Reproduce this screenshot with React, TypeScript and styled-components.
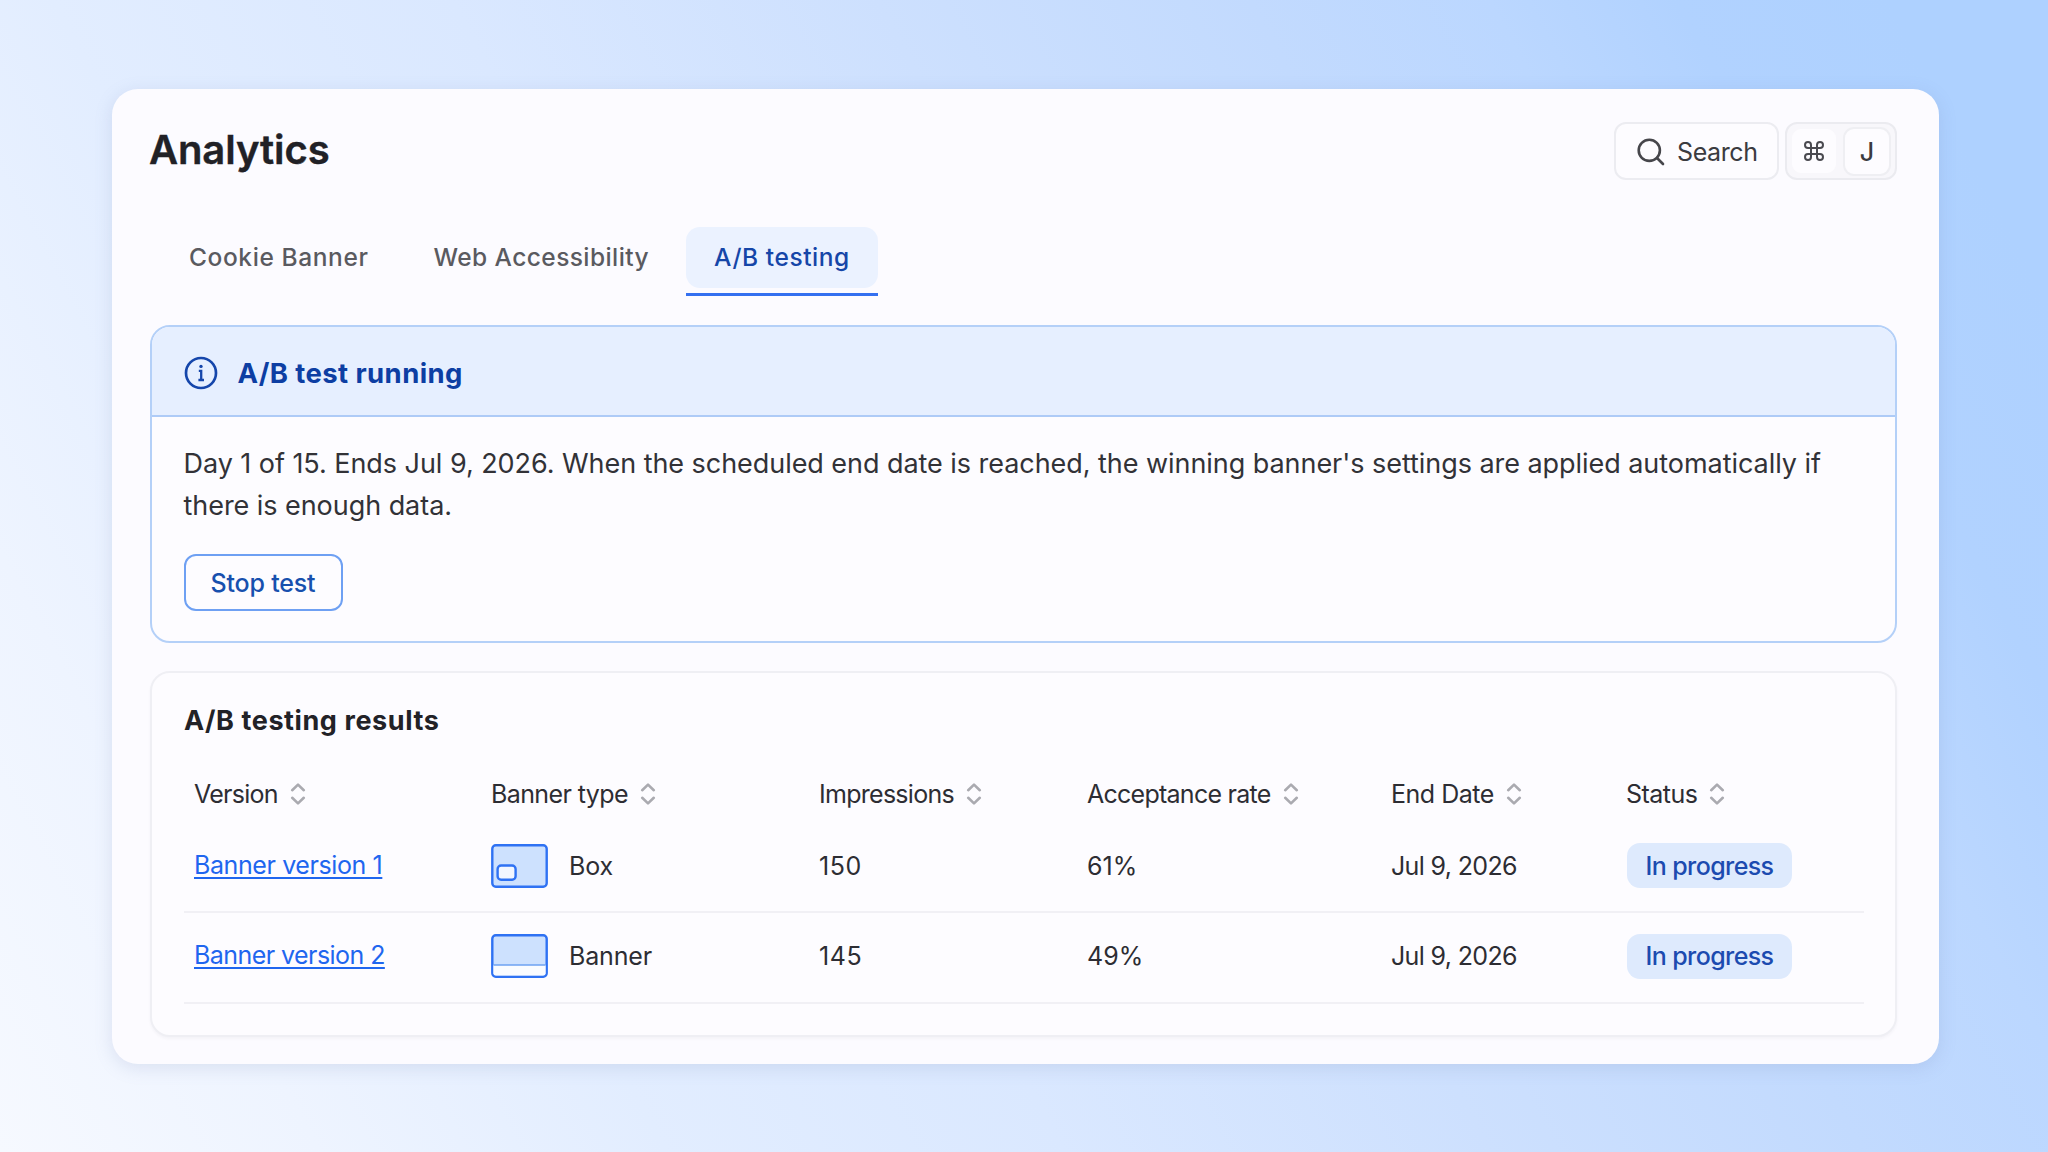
import React from "react";
import styled, { createGlobalStyle, css } from "styled-components";
import { Command } from "lucide-react";

const GlobalStyle = createGlobalStyle`
  * { box-sizing: border-box; }
  body { margin: 0; font-family: Inter, "Liberation Sans", sans-serif; color: #2d2d33; }
`;

const Page = styled.div`
  width: 2048px;
  height: 1152px;
  padding: 89px 109px 88px 112px;
  overflow: hidden;
  background: linear-gradient(62deg, #f6f9ff 0%, #eef4ff 12%, #e2edff 25%, #dae8ff 40%, #cde0fe 56%, #c2dafe 70%, #bbd7ff 79%, #b1d2ff 86%, #aed1ff 94%);
`;

const Card = styled.main`
  height: 975px;
  padding: 33px 42px 28px 38px;
  border-radius: 26px;
  background: #fcfbff;
  box-shadow: 0 4px 18px rgba(110, 130, 180, 0.18);
`;

const Header = styled.header`
  display: flex;
  justify-content: space-between;
  align-items: center;
  height: 58px;
`;

const Title = styled.h1`
  margin: 0 0 0 -1px;
  padding-bottom: 3px;
  font-size: 40px;
  line-height: 48px;
  font-weight: 600;
  letter-spacing: -0.1px;
  color: #212126;
  -webkit-text-stroke: 0.4px #212126;
`;

const Tools = styled.div`
  display: flex;
  gap: 6px;
`;

const SearchButton = styled.button`
  display: flex;
  align-items: center;
  gap: 12px;
  width: 165px;
  height: 58px;
  padding: 1px 0 0 21px;
  border: 2px solid #ececf1;
  border-radius: 12px;
  background: #fdfcff;
  font: 400 25px/30px Inter, sans-serif;
  letter-spacing: -0.4px;
  color: #3b3b40;
`;

const Shortcut = styled.div`
  display: flex;
  align-items: center;
  gap: 9px;
  width: 112px;
  height: 58px;
  padding: 0 6px 0 5px;
  border: 2px solid #ebebf0;
  border-radius: 12px;
  background: #f8f7fb;
`;

const Key = styled.kbd<{ $raised?: boolean }>`
  display: flex;
  align-items: center;
  justify-content: center;
  width: 44px;
  height: 44px;
  border-radius: 9px;
  background: #fdfcff;
  font: 500 25px/30px Inter, sans-serif;
  color: #4a4a50;
  ${(p) => p.$raised && css`
    height: 45px;
    padding-top: 2px;
    color: #3b3b40;
    box-shadow: 0 0 0 2px #efeff3;
  `}
`;

const Tabs = styled.nav`
  display: flex;
  gap: 9px;
  margin: 47px 0 27px 11px;
`;

const Tab = styled.a<{ $active?: boolean; $spacing: number }>`
  display: flex;
  flex-direction: column;
  gap: 5px;
  font-size: 24.5px;
  line-height: 30px;
  font-weight: 500;
  letter-spacing: ${(p) => p.$spacing}px;
  color: ${(p) => (p.$active ? "#1546a8" : "#5a5a60")};
`;

const TabLabel = styled.span<{ $active?: boolean }>`
  padding: 15px 28px 16px;
  border-radius: 14px;
  background: ${(p) => (p.$active ? "#ebf2ff" : "transparent")};
`;

const TabLine = styled.span<{ $active?: boolean }>`
  height: 3px;
  margin-bottom: 2px;
  background: ${(p) => (p.$active ? "#3470f0" : "transparent")};
`;

const Alert = styled.section`
  height: 318px;
  margin-left: -0.5px;
  border: 2px solid #b4d0f8;
  border-radius: 20px;
  background: #fdfcff;
  overflow: hidden;
`;

const AlertHeader = styled.div`
  display: flex;
  align-items: center;
  gap: 20px;
  height: 90px;
  padding: 4px 0 0 32px;
  border-bottom: 2px solid #aecbf7;
  background: #e6efff;
`;

const AlertTitle = styled.h2`
  margin: 0;
  font-size: 27.5px;
  line-height: 34px;
  font-weight: 700;
  letter-spacing: 0.4px;
  color: #0d3ea3;
`;

const AlertBody = styled.div`
  display: flex;
  flex-direction: column;
  align-items: flex-start;
  gap: 27px;
  padding: 26px 32px 0;
`;

const AlertText = styled.p`
  margin: 0;
  font-size: 27px;
  line-height: 42px;
  letter-spacing: -0.05px;
  color: #323237;
  white-space: nowrap;
`;

const StopButton = styled.button`
  width: 159px;
  height: 57px;
  padding: 0;
  border: 2px solid #6ea0f3;
  border-radius: 12px;
  background: #fdfcff;
  font: 500 25px/30px Inter, sans-serif;
  letter-spacing: -0.2px;
  color: #1750ae;
`;

const Results = styled.section`
  height: 366px;
  margin-top: 28px;
  padding: 31px 31px 0 32px;
  border: 2px solid #efeff4;
  border-radius: 20px;
  background: #fdfcff;
  box-shadow: 0 2px 3px rgba(40, 40, 80, 0.04);
`;

const ResultsTitle = styled.h2`
  margin: 0;
  font-size: 27px;
  line-height: 34px;
  font-weight: 700;
  letter-spacing: 0.58px;
  color: #222227;
`;

const Row = styled.div<{ $head?: boolean; $last?: boolean }>`
  display: grid;
  grid-template-columns: 297px 328px 268px 304px 235px 1fr;
  align-items: center;
  height: ${(p) => (p.$last ? 91 : 92)}px;
  padding: 0 0 ${(p) => (p.$last ? 3 : 1)}px 10px;
  border-bottom: 2px solid #f1f0f5;
  font-size: 25px;
  line-height: 30px;
  ${(p) => p.$head && css`
    height: 83px;
    padding-bottom: 2px;
    padding-top: 30px;
    border: 0;
  `}
`;

const Cell = styled.div<{ $spacing?: number; $gap?: number }>`
  display: flex;
  align-items: center;
  gap: ${(p) => p.$gap ?? 12}px;
  letter-spacing: ${(p) => p.$spacing ?? 0}px;
`;

const Link = styled.a<{ $spacing: number }>`
  justify-self: start;
  padding-bottom: 2px;
  color: #1f66ef;
  letter-spacing: ${(p) => p.$spacing}px;
  text-decoration: underline;
  text-decoration-thickness: 2px;
  text-underline-offset: 3px;
  text-decoration-skip-ink: none;
`;

const Pill = styled.span`
  display: flex;
  align-items: center;
  justify-content: center;
  width: 165px;
  height: 45px;
  margin-left: 1px;
  border-radius: 13px;
  background: #deeafd;
  font-weight: 500;
  letter-spacing: -0.6px;
  color: #1c4bb0;
`;

const SearchIcon = () => (
  <svg width="28" height="28" viewBox="0 0 28 28" fill="none" stroke="#46464b" strokeWidth="2.6" strokeLinecap="round">
    <circle cx="12.3" cy="12.3" r="10.6" />
    <path d="M20 20L26 26" />
  </svg>
);

const InfoIcon = () => (
  <svg width="34" height="34" viewBox="0 0 34 34" fill="none" stroke="#1546ab" strokeWidth="2.7">
    <circle cx="17" cy="17" r="15" />
    <path d="M14.8 14.8H17.2V24M14.4 24H20" strokeWidth="2.3" />
    <circle cx="17" cy="10.4" r="1.7" fill="#1546ab" stroke="none" />
  </svg>
);

const SortIcon = () => (
  <svg width="16" height="24" viewBox="0 0 16 24" fill="none" stroke="#aaaab0" strokeWidth="2.6" strokeLinecap="round" strokeLinejoin="round">
    <path d="M2.2 8.2L8 2.6L13.8 8.2M2.2 15.8L8 21.4L13.8 15.8" />
  </svg>
);

const TypeIcon = ({ kind }: { kind: string }) => (
  <svg width="57" height="44" viewBox="0 0 57 44" fill="none" stroke="#2f72f3" strokeWidth="2.4">
    <rect x="1.3" y="1.3" width="54.4" height="41.4" rx="3.5" fill="#cde1fe" />
    {kind === "Box" ? (
      <rect x="6.6" y="21.5" width="18" height="14.3" rx="3.5" fill="#f3f7ff" />
    ) : (
      <>
        <path d="M2.4 31H54.6V39.5Q54.6 41.6 52 41.6H5Q2.4 41.6 2.4 39.5Z" fill="#fafcff" stroke="none" />
        <path d="M2.4 31H54.6" stroke="#6da2f2" strokeWidth="1.6" />
      </>
    )}
  </svg>
);

const tabs = [
  { label: "Cookie Banner", spacing: 0.6 },
  { label: "Web Accessibility", spacing: 0.42 },
  { label: "A/B testing", spacing: 0.56, active: true },
];

const columns = [
  { label: "Version", spacing: -0.75 },
  { label: "Banner type", spacing: -0.6 },
  { label: "Impressions", spacing: -0.72 },
  { label: "Acceptance rate", spacing: -0.74 },
  { label: "End Date", spacing: -0.5 },
  { label: "Status", spacing: -0.52 },
];

const rows = [
  { name: "Banner version 1", spacing: -0.4, type: "Box", impressions: "150", rate: "61%", end: "Jul 9, 2026", status: "In progress" },
  { name: "Banner version 2", spacing: -0.56, type: "Banner", impressions: "145", rate: "49%", end: "Jul 9, 2026", status: "In progress" },
];

export default function App() {
  return (
    <Page>
      <GlobalStyle />
      <Card>
        <Header>
          <Title>Analytics</Title>
          <Tools>
            <SearchButton><SearchIcon />Search</SearchButton>
            <Shortcut>
              <Key><Command size={24} strokeWidth={2} /></Key>
              <Key $raised>J</Key>
            </Shortcut>
          </Tools>
        </Header>
        <Tabs>
          {tabs.map((t) => (
            <Tab key={t.label} $active={t.active} $spacing={t.spacing}>
              <TabLabel $active={t.active}>{t.label}</TabLabel>
              <TabLine $active={t.active} />
            </Tab>
          ))}
        </Tabs>
        <Alert>
          <AlertHeader>
            <InfoIcon />
            <AlertTitle>A/B test running</AlertTitle>
          </AlertHeader>
          <AlertBody>
            <AlertText>
              Day 1 of 15. Ends Jul 9, 2026. When the scheduled end date is reached, the winning banner's settings are applied automatically if
              <br />
              there is enough data.
            </AlertText>
            <StopButton>Stop test</StopButton>
          </AlertBody>
        </Alert>
        <Results>
          <ResultsTitle>A/B testing results</ResultsTitle>
          <Row $head>
            {columns.map((c) => (
              <Cell key={c.label} $spacing={c.spacing}>{c.label}<SortIcon /></Cell>
            ))}
          </Row>
          {rows.map((r, i) => (
            <Row key={r.name} $last={i === rows.length - 1}>
              <Link $spacing={r.spacing}>{r.name}</Link>
              <Cell $gap={21} $spacing={-0.15}><TypeIcon kind={r.type} />{r.type}</Cell>
              <Cell $spacing={0.6}>{r.impressions}</Cell>
              <Cell>{r.rate}</Cell>
              <Cell $spacing={-0.65}>{r.end}</Cell>
              <Cell><Pill>{r.status}</Pill></Cell>
            </Row>
          ))}
        </Results>
      </Card>
    </Page>
  );
}
